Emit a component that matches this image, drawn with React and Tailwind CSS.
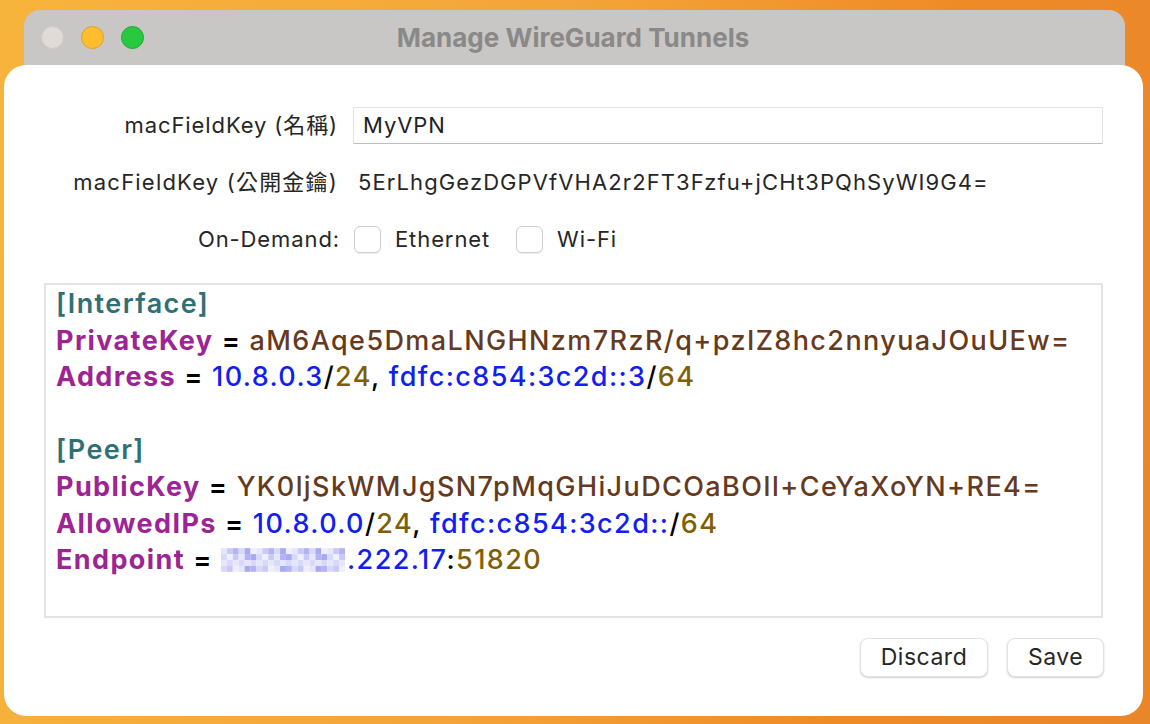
import React from "react";

const sans = { fontFamily: "Inter, 'Noto Sans CJK TC', sans-serif" };

const K = ({ children }) => <span className="font-bold text-[#9c2494]">{children}</span>;
const Eq = () => <span className="font-semibold text-black"> = </span>;
const V = ({ children }) => <span className="text-[#653a21]">{children}</span>;
const Ip = ({ children }) => <span className="text-[#1020f2]">{children}</span>;
const Num = ({ children }) => <span className="text-[#7f5f06]">{children}</span>;
const P = ({ children }) => <span className="text-black">{children}</span>;
const Sec = ({ children }) => <div className="font-semibold text-[#2f7075]">{children}</div>;

// pixelated block over the hidden part of the endpoint address
const Blur = () => {
  const cols = ["#e6e6fb", "#c9c9f7", "#b3b3f4", "#d8d8fa", "#a9a9f2", "#efeffd"];
  const cells = [];
  for (let r = 0; r < 4; r++) {
    for (let c = 0; c < 21; c++) {
      cells.push(
        <rect key={r + "-" + c} x={c * 6} y={r * 6} width="6" height="6" fill={cols[(c * 7 + r * 3 + (c % 3) * r) % cols.length]} />
      );
    }
  }
  return (
    <svg width="124" height="24" viewBox="0 0 126 24" className="inline-block align-[-3px] mr-[2px]">
      {cells}
    </svg>
  );
};

const Checkbox = () => (
  <span className="inline-block w-[27px] h-[27px] rounded-[6px] border border-[#cfcfcf] bg-white shadow-[0_1px_1px_rgba(0,0,0,0.08)]" />
);

export default function App() {
  return (
    <div
      className="w-[1150px] h-[724px] overflow-hidden pt-[10px] bg-[linear-gradient(100deg,#f7b43c_0%,#f4a43a_45%,#ef8b27_75%,#e9862a_100%)]"
      style={sans}
    >
      {/* title bar */}
      <div className="ml-[24px] mr-[25px] h-[56px] rounded-t-[16px] bg-[#c8c7c5] border-b border-[#a8a8a8] flex items-center px-[17px]">
        <div className="flex gap-[17px]">
          <span className="w-[23px] h-[23px] rounded-full bg-[#e1dbd8] border border-[#cfc9c6]" />
          <span className="w-[23px] h-[23px] rounded-full bg-[#febc2e] border border-[#e0a125]" />
          <span className="w-[23px] h-[23px] rounded-full bg-[#28c840] border border-[#1fa833]" />
        </div>
        <div className="flex-1 text-center pr-[106px] text-[26px] font-bold text-[#8a8988]">
          Manage WireGuard Tunnels
        </div>
      </div>

      {/* sheet */}
      <div className="ml-[4px] mr-[7px] h-[651px] -mt-px rounded-[22px] bg-white pt-[42px] text-[#262626] text-[22px] tracking-[0.9px]">
        <div className="flex items-center h-[37px]">
          <div className="w-[334px] text-right">macFieldKey (名稱)</div>
          <div className="ml-[15px] w-[750px] h-[37px] border border-[#e4e4e4] border-b-[#bdbdbd] flex items-center pl-[9px] text-[#222]">
            MyVPN
          </div>
        </div>

        <div className="flex items-center h-[36px] mt-[20px]">
          <div className="w-[334px] text-right tracking-[1.2px]">macFieldKey (公開金鑰)</div>
          <div className="ml-[20px] tracking-[1.1px]">5ErLhgGezDGPVfVHA2r2FT3Fzfu+jCHt3PQhSyWI9G4=</div>
        </div>

        <div className="flex items-center h-[36px] mt-[21px]">
          <div className="w-[336px] text-right">On-Demand:</div>
          <div className="ml-[14px] flex items-center">
            <Checkbox />
            <span className="ml-[14px] tracking-[0.9px]">Ethernet</span>
          </div>
          <div className="ml-[26px] flex items-center">
            <Checkbox />
            <span className="ml-[14px]">Wi-Fi</span>
          </div>
        </div>

        {/* config editor */}
        <div className="ml-[40px] mt-[26px] w-[1059px] h-[335px] border-2 border-[#e4e4e4] pl-[10px] pt-[1px] text-[27px] font-medium leading-[36.6px] tracking-[1.4px]">
          <Sec>[Interface]</Sec>
          <div>
            <K>PrivateKey</K><Eq /><V>aM6Aqe5DmaLNGHNzm7RzR/q+pzIZ8hc2nnyuaJOuUEw=</V>
          </div>
          <div>
            <K>Address</K><Eq /><Ip>10.8.0.3</Ip><P>/</P><Num>24</Num><P>, </P>
            <Ip>fdfc:c854:3c2d::3</Ip><P>/</P><Num>64</Num>
          </div>
          <div className="h-[36.6px]" />
          <Sec>[Peer]</Sec>
          <div>
            <K>PublicKey</K><Eq /><V>YK0ljSkWMJgSN7pMqGHiJuDCOaBOIl+CeYaXoYN+RE4=</V>
          </div>
          <div>
            <K>AllowedIPs</K><Eq /><Ip>10.8.0.0</Ip><P>/</P><Num>24</Num><P>, </P>
            <Ip>fdfc:c854:3c2d::</Ip><P>/</P><Num>64</Num>
          </div>
          <div>
            <K>Endpoint</K><Eq /><Blur /><Ip>.222.17</Ip><P>:</P><Num>51820</Num>
          </div>
        </div>

        <div className="flex justify-end gap-[19px] mt-[20px] w-[1100px] tracking-[0.5px]">
          <button className="w-[128px] h-[39px] rounded-[8px] bg-white border border-[#e2e2e2] shadow-[0_1px_2px_rgba(0,0,0,0.18)] text-[23px] text-[#262626]">
            Discard
          </button>
          <button className="w-[97px] h-[39px] rounded-[8px] bg-white border border-[#e2e2e2] shadow-[0_1px_2px_rgba(0,0,0,0.18)] text-[23px] text-[#262626]">
            Save
          </button>
        </div>
      </div>
    </div>
  );
}
